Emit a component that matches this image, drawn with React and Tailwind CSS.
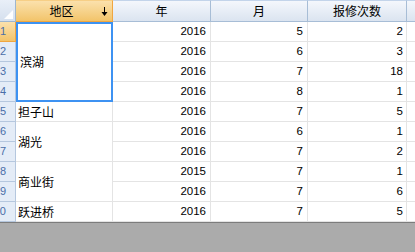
import React from "react";

const rows = [
  ["2016", "5", "2"],
  ["2016", "6", "3"],
  ["2016", "7", "18"],
  ["2016", "8", "1"],
  ["2016", "7", "5"],
  ["2016", "6", "1"],
  ["2016", "7", "2"],
  ["2015", "7", "1"],
  ["2016", "7", "6"],
  ["2016", "7", "5"],
];

const regions = [
  { name: "滨湖", h: "h-[80px]", sel: true },
  { name: "担子山", h: "h-[20px]" },
  { name: "湖光", h: "h-[40px]" },
  { name: "商业街", h: "h-[40px]" },
  { name: "跃进桥", h: "h-[20px]" },
];

const font = { fontFamily: '"Liberation Sans","Noto Sans CJK SC",sans-serif' };

export default function App() {
  return (
    <div className="w-[415px] h-[252px] overflow-hidden bg-[#ababab] text-[12px] text-black" style={font}>
      {/* header */}
      <div className="flex h-[22px]">
        <div className="w-[16px] h-full shrink-0 bg-gradient-to-b from-[#e9eff8] to-[#d5e0ee] border-r border-b border-[#9eb6ce] flex items-end justify-end p-[2px]">
          <svg width="9" height="9" viewBox="0 0 9 9">
            <polygon points="9,0 9,9 0,9" fill="#ffffff" opacity="0.95" />
          </svg>
        </div>
        <div className="w-[97px] shrink-0 h-full flex items-center bg-gradient-to-b from-[#fbe1ac] to-[#f2c469] border-r border-b border-[#f0a640] border-t border-t-[#f7cf86]">
          <span className="flex-1 text-center pl-[6px]" style={{ fontFamily: '"Noto Sans CJK SC",sans-serif' }}>地区</span>
          <svg width="7" height="9" viewBox="0 0 7 9" className="mr-[4px] mt-[1px]">
            <line x1="3.5" y1="0" x2="3.5" y2="8" stroke="#000" strokeWidth="1" />
            <polygon points="0.5,5 6.5,5 3.5,9" fill="#000" />
          </svg>
        </div>
        {["年", "月", "报修次数"].map((t, i) => (
          <div
            key={t}
            className={
              (i === 0 ? "w-[98px] " : i === 1 ? "w-[97px] " : "w-[99px] ") +
              "shrink-0 h-full flex items-center justify-center bg-gradient-to-b from-[#f4f7fc] to-[#dbe4f0] border-r border-b border-[#a7bdd6] border-t border-t-[#c3d4ea]"
            }
            style={{ fontFamily: '"Noto Sans CJK SC",sans-serif' }}
          >
            {t}
          </div>
        ))}
        <div className="flex-1 h-full bg-gradient-to-b from-[#f4f7fc] to-[#dbe4f0] border-b border-[#a7bdd6] border-t border-t-[#c3d4ea]" />
      </div>

      {/* body */}
      <div className="flex h-[200px] bg-white">
        <div className="w-[16px] shrink-0 flex flex-col">
          {rows.map((_, i) => (
            <div
              key={i}
              className={
                "h-[20px] overflow-hidden flex items-center border-r border-b text-[11px] " +
                (i === 0
                  ? "bg-gradient-to-b from-[#fbe1ac] to-[#f2c469] border-[#f0a640] text-[#4a6ea8]"
                  : "bg-[#e4ecf7] border-[#b5c7de] text-[#4a6ea8]")
              }
            >
              <div className="w-[6px] flex justify-end">
                <span>{i + 1}</span>
              </div>
            </div>
          ))}
        </div>
        <div className="w-[97px] shrink-0 flex flex-col" style={{ fontFamily: '"Noto Sans CJK SC",sans-serif' }}>
          {regions.map((r) => (
            <div
              key={r.name}
              className={
                r.h +
                " flex items-center pl-[2px] " +
                (r.sel ? "border-2 border-[#3d92f2] pl-[1px]" : "border-r border-b border-[#e4e4e4]")
              }
            >
              {r.name}
            </div>
          ))}
        </div>
        <div className="grid grid-cols-[98px_97px_99px_1fr] auto-rows-[20px] flex-1 text-[11.5px]">
          {rows.map((r, i) => (
            <React.Fragment key={i}>
              <div className="border-r border-b border-[#e4e4e4] flex items-center justify-end pr-[4px]">{r[0]}</div>
              <div className="border-r border-b border-[#e4e4e4] flex items-center justify-end pr-[4px]">{r[1]}</div>
              <div className="border-r border-b border-[#e4e4e4] flex items-center justify-end pr-[3px]">{r[2]}</div>
              <div className="border-b border-[#e4e4e4]" />
            </React.Fragment>
          ))}
        </div>
      </div>
      <div className="h-[30px] border-t border-[#7c7c7c] bg-[#ababab]" />
    </div>
  );
}
